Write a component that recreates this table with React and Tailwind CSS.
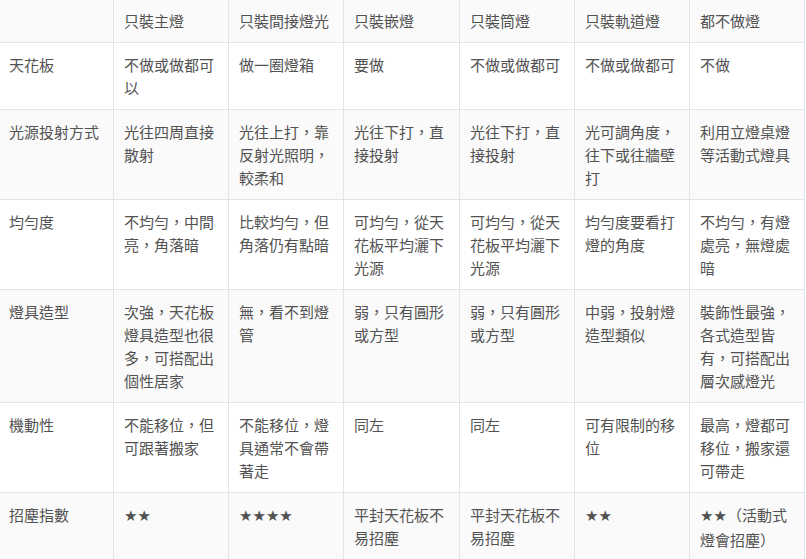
import React from "react";

const headers = ["", "只裝主燈", "只裝間接燈光", "只裝嵌燈", "只裝筒燈", "只裝軌道燈", "都不做燈"];

const S = ({ children }) => (
  <span className="font-['DejaVu_Sans',sans-serif]">{children}</span>
);

const rows = [
  ["天花板", "不做或做都可以", "做一圈燈箱", "要做", "不做或做都可", "不做或做都可", "不做"],
  ["光源投射方式", "光往四周直接散射", "光往上打，靠反射光照明，較柔和", "光往下打，直接投射", "光往下打，直接投射", "光可調角度，往下或往牆壁打", "利用立燈桌燈等活動式燈具"],
  ["均勻度", "不均勻，中間亮，角落暗", "比較均勻，但角落仍有點暗", "可均勻，從天花板平均灑下光源", "可均勻，從天花板平均灑下光源", "均勻度要看打燈的角度", "不均勻，有燈處亮，無燈處暗"],
  ["燈具造型", "次強，天花板燈具造型也很多，可搭配出個性居家", "無，看不到燈管", "弱，只有圓形或方型", "弱，只有圓形或方型", "中弱，投射燈造型類似", "裝飾性最強，各式造型皆有，可搭配出層次感燈光"],
  ["機動性", "不能移位，但可跟著搬家", "不能移位，燈具通常不會帶著走", "同左", "同左", "可有限制的移位", "最高，燈都可移位，搬家還可帶走"],
  [
    "招塵指數",
    <S>★★</S>,
    <S>★★★★</S>,
    "平封天花板不易招塵",
    "平封天花板不易招塵",
    <S>★★</S>,
    <>
      <S>★★</S>（活動式燈會招塵）
    </>,
  ],
];

export default function App() {
  return (
    <div
      lang="zh-TW"
      className="w-[806px] h-[559px] overflow-hidden bg-white text-[15px] leading-[23px] text-[#525252] font-['Noto_Sans_CJK_TC','Noto_Sans',sans-serif]"
    >
      <div className="grid grid-cols-[114px_115px_115px_116px_115px_115px_115px] w-[805px]">
        {headers.map((h, i) => (
          <div
            key={"h" + i}
            className={`bg-[#fafafa] border-r border-b border-[#e1e4ea] pt-[9px] pb-[10px] pr-[10px] ${i === 0 ? "pl-[9px]" : "pl-[10px]"}`}
          >
            {h || "\u00a0"}
          </div>
        ))}
        {rows.map((r, ri) =>
          r.map((c, ci) => (
            <div
              key={ri + "-" + ci}
              className={`${ri % 2 === 1 ? "bg-[#fafafa]" : "bg-white"} border-r border-b border-[#e1e4ea] py-[10px] pr-[10px] ${ci === 0 ? "pl-[9px]" : "pl-[10px]"}`}
            >
              {c}
            </div>
          ))
        )}
      </div>
    </div>
  );
}
